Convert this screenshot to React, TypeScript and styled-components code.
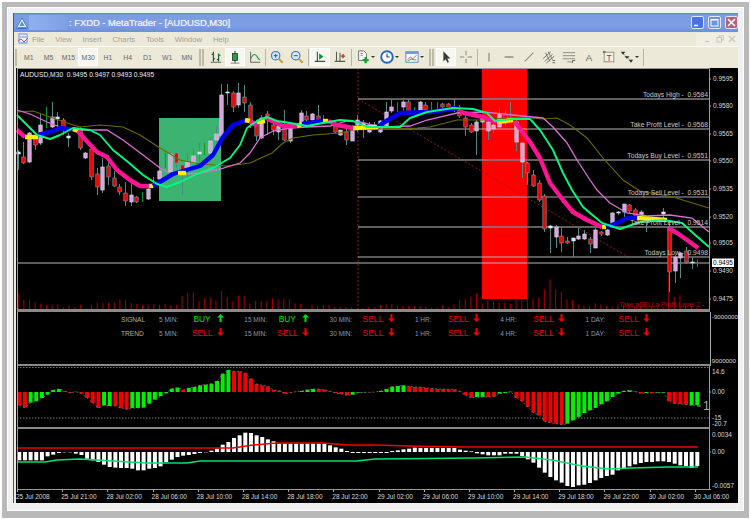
import React from 'react';
import styled, { createGlobalStyle } from 'styled-components';

const Global = createGlobalStyle`
    html, body { margin: 0; padding: 0; background: #fff; }
    body { font-family: "Liberation Sans", Arial, sans-serif; }
`;

const Outer = styled.div`
    box-sizing: border-box;
    margin: 2px 0 0 2px;
    width: 747px;
    height: 516px;
    padding: 5px;
    background: #b9b9b9;
`;
const Inner = styled.div`
    box-sizing: border-box;
    height: 504px;
    padding: 5px 5px 7px 5px;
    background: #f0f0f0;
    border: 1px solid #fff;
`;
const Win = styled.div`
    box-sizing: border-box;
    width: 725px;
    height: 490px;
    border-left: 1px solid #555;
    background: #ece9d8;
    display: flex;
    flex-direction: column;
`;
const TitleBar = styled.div`
    height: 19px;
    flex: none;
    display: flex;
    align-items: center;
    padding-left: 2px;
    background: linear-gradient(to bottom, #5c84dc 0, #7b9ce2 12%, #7e9ee3 65%, #6d90df 100%);
`;
const Erased = styled.span`
    width: 39px;
    height: 15px;
    margin: 0 1px 0 1px;
    background: linear-gradient(to right, #8fb0f0, #7e9ee3);
`;
const TitleText = styled.span`
    flex: 1;
    font-size: 9.4px;
    color: #e6ecf9;
    text-shadow: 0 0 0.4px #fff;
    white-space: pre;
`;
const WinBtn = styled.div<{ $bg: string }>`
    width: 13px;
    height: 13px;
    margin-right: 4px;
    border-radius: 2px;
    border: 0.5px solid #dfe6f7;
    box-sizing: border-box;
    background: ${(p) => p.$bg};
    display: flex;
    align-items: center;
    justify-content: center;
    &:last-child { margin-right: 0; }
`;
const MenuBar = styled.div`
    height: 14px;
    flex: none;
    display: flex;
    align-items: center;
    gap: 10.8px;
    padding-left: 3px;
    font-size: 7.7px;
    color: #a3a198;
`;
const MenuIcon = styled.div`
    width: 12px;
    height: 12px;
    margin-right: -7.8px;
`;
const MenuRight = styled.div`
    margin-left: auto;
    display: flex;
    align-items: center;
    gap: 4px;
    height: 13px;
    padding: 0 2px 0 8px;
    background: #f1efe4;
`;
const ToolBar = styled.div`
    box-sizing: border-box;
    height: 22px;
    flex: none;
    display: flex;
    align-items: center;
    border-top: 1px solid #fbfaf4;
    padding-bottom: 1px;
`;
const Grip = styled.div<{ $double?: boolean; $ml?: number }>`
    flex: none;
    width: ${(p) => (p.$double ? 5 : 2)}px;
    height: 17px;
    margin: 0 2px 0 ${(p) => p.$ml ?? 1}px;
    border-left: 2px solid #bdbaa8;
    border-right: ${(p) => (p.$double ? '2px solid #bdbaa8' : 'none')};
    box-sizing: border-box;
`;
const Sep = styled.div<{ $ml?: number }>`
    flex: none;
    width: 1px;
    height: 17px;
    margin: 0 1px 0 ${(p) => p.$ml ?? 1}px;
    background: #b8b5a3;
`;
const TfBtn = styled.div<{ $on?: boolean }>`
    box-sizing: border-box;
    flex: none;
    width: 19.75px;
    height: 18px;
    display: flex;
    align-items: center;
    justify-content: center;
    font-size: 6.9px;
    color: #666;
    background: ${(p) => (p.$on ? '#f7f6ef' : 'transparent')};
    border: 1px solid ${(p) => (p.$on ? '#fff' : 'transparent')};
`;
const IconBtn = styled.div<{ $on?: boolean; $w?: number }>`
    box-sizing: border-box;
    flex: none;
    width: ${(p) => p.$w ?? 20}px;
    height: 18px;
    display: flex;
    align-items: center;
    justify-content: center;
    gap: 1px;
    background: ${(p) => (p.$on ? '#f7f6ef' : 'transparent')};
    border: 1px solid ${(p) => (p.$on ? '#fff' : 'transparent')};
`;
const Caret = styled.span`
    width: 0;
    height: 0;
    border-left: 2.2px solid transparent;
    border-right: 2.2px solid transparent;
    border-top: 2.5px solid #333;
`;
const ChartArea = styled.div`
    flex: none;
    width: 722px;
    height: 435px;
    margin-left: 2px;
    background: #000;
    display: flex;
    flex-direction: column;
    overflow: hidden;
`;
const Pane = styled.svg`
    display: block;
    flex: none;
`;
const AxisText = styled.text`
    font-size: 6.5px;
    fill: #d8d8d8;
    white-space: pre;
`;
const TopLabel = styled.text`
    font-size: 6.7px;
    fill: #eee;
    white-space: pre;
`;
const LevelText = styled.text<{ $c?: string }>`
    font-size: 6.7px;
    fill: ${(p) => p.$c ?? '#c8c8c8'};
    text-anchor: end;
    white-space: pre;
`;
const SignalPane = styled.div`
    height: 54px;
    flex: none;
    display: flex;
`;
const SignalRows = styled.div`
    box-sizing: border-box;
    width: 694px;
    height: 54px;
    padding: 0 0 0 103px;
    margin-left: 1px;
    border-left: 1px solid #aaa;
    border-right: 1px solid #aaa;
    border-bottom: 2px solid #8a8a8a;
`;
const SignalRow = styled.div`
    display: flex;
    align-items: center;
    height: 14px;
`;
const RowLabel = styled.div`
    width: 38px;
    font-size: 6.6px;
    color: #b4b492;
`;
const TimeCell = styled.div`
    width: 85.3px;
    flex: none;
    display: flex;
    align-items: center;
`;
const TimeLabel = styled.div`
    width: 33px;
    font-size: 6.5px;
    color: #8d9aa8;
    white-space: nowrap;
`;
const SignalValue = styled.div<{ $buy?: boolean }>`
    width: 20px;
    text-align: center;
    font-size: 8.4px;
    color: ${(p) => (p.$buy ? '#00e000' : '#f00000')};
    white-space: nowrap;
`;
const ArrowIcon = styled.svg`
    margin: -3px 0 0 5px;
`;
const ScaleCol = styled.div`
    flex: 1;
    display: flex;
    flex-direction: column;
    justify-content: space-between;
    padding: 1px 0 2px 1px;
    font-size: 6.2px;
    color: #d8d8d8;
    white-space: nowrap;
`;
const TimeAxis = styled.div`
    box-sizing: border-box;
    height: 14px;
    flex: none;
    width: 694px;
    margin-left: 1px;
    display: flex;
    border-top: 1px solid #999;
`;
const TimeTick = styled.div`
    flex: none;
    width: 45.2px;
    position: relative;
    font-size: 6.5px;
    color: #d8d8d8;
    white-space: nowrap;
    padding-top: 3px;
    text-indent: -1px;
    &::before {
        content: '';
        position: absolute;
        left: 0;
        top: 0;
        width: 1px;
        height: 2px;
        background: #aaa;
    }
`;

// icons
const Ico: React.FC<{ children: React.ReactNode }> = ({ children }) => (
    <svg width="14" height="14" viewBox="0 0 16 16" fill="none">{children}</svg>
);

const AppLogo = () => (
    <svg width="12" height="12" viewBox="0 0 12 12">
        <path d="M6 1 L11.5 11 H.5 Z" fill="#e8f2ff" stroke="#2d6fc4" strokeWidth=".8" />
        <path d="M6 4 L8.5 9 H3.5 Z" fill="#4e8fdc" />
        <path d="M2 11 H10" stroke="#1f55a8" strokeWidth="1" />
    </svg>
);
const AppDoc = () => (
    <svg width="12" height="12" viewBox="0 0 12 12">
        <rect x="2" y="1" width="8" height="9" fill="#eef2ff" stroke="#6d8fcf" />
        <path d="M3 4 H9" stroke="#6d8fcf" />
        <path d="M1 8 L4 6 L7 9 L11 5" stroke="#a05a7a" fill="none" />
        <rect x="2" y="9" width="8" height="2" fill="#9db6ea" />
    </svg>
);
const BarsIco = () => (
    <Ico>
        <path d="M5 2 V13 M3 5 H5 M5 10 H7 M11 4 V13 M9 11 H11 M11 6 H13" stroke="#0b5b2c" strokeWidth="1.3" />
        <path d="M2 14 H14" stroke="#555" />
    </Ico>
);
const CandlesIco = () => (
    <Ico>
        <path d="M8 1 V15" stroke="#222" />
        <rect x="5" y="4" width="6" height="8" fill="#1fa045" stroke="#222" strokeWidth=".8" />
        <path d="M3 15 H13" stroke="#777" />
    </Ico>
);
const LineIco = () => (
    <Ico>
        <path d="M3 2 V14 H14" stroke="#555" />
        <path d="M3 10 Q7 2 10 7 T14 11" stroke="#1f9a5b" strokeWidth="1.2" />
    </Ico>
);
const ZoomIco: React.FC<{ plus?: boolean }> = ({ plus }) => (
    <Ico>
        <circle cx="6.5" cy="6.5" r="4.8" fill="#d8e8fb" stroke="#3b72b8" strokeWidth="1.3" />
        <path d="M4.2 6.5 H8.8" stroke="#2a5ca8" strokeWidth="1.2" />
        {plus && <path d="M6.5 4.2 V8.8" stroke="#2a5ca8" strokeWidth="1.2" />}
        <path d="M10 10 L14.5 14.5" stroke="#c9a23a" strokeWidth="2.4" />
    </Ico>
);
const ShiftIco = () => (
    <Ico>
        <path d="M5 2 V13 M2 13 H14" stroke="#33573f" strokeWidth="1.3" />
        <path d="M7 4 L12 7.5 L7 11 Z" fill="#0d8f35" />
    </Ico>
);
const ScrollIco = () => (
    <Ico>
        <path d="M4 2 V13 M2 13 H14 M8 3 V13" stroke="#53604f" strokeWidth="1.2" />
        <path d="M9 7 H14 M11.5 4.5 V9.5" stroke="#c0392b" strokeWidth="1.6" />
    </Ico>
);
const OrderIco = () => (
    <Ico>
        <path d="M3 1 H9 L12 4 V12 H3 Z" fill="#f8f8f8" stroke="#666" />
        <path d="M5 4 H8 M5 6 H8" stroke="#889" />
        <path d="M11 8 V15 M7.5 11.5 H14.5" stroke="#12a52c" strokeWidth="2.6" />
    </Ico>
);
const ClockIco = () => (
    <Ico>
        <circle cx="8" cy="8" r="6.6" fill="#fff" stroke="#2067c0" strokeWidth="2.2" />
        <path d="M8 4 V8 H11" stroke="#1a3d7a" strokeWidth="1.2" />
    </Ico>
);
const TemplateIco = () => (
    <Ico>
        <rect x="1" y="2" width="14" height="12" fill="#f4f6fb" stroke="#5a7fb8" />
        <rect x="1" y="2" width="14" height="2.5" fill="#6d9ad8" />
        <path d="M3 11 L6 8 L9 10 L13 6" stroke="#c0504d" />
        <path d="M3 12.5 L7 10.5 L13 11.5" stroke="#3d9a52" />
    </Ico>
);
const CursorIco = () => (
    <Ico>
        <path d="M5 1.5 V13 L7.7 10.6 L9.6 14.5 L11.4 13.6 L9.5 9.8 L13 9.6 Z" fill="#3a3a3a" />
    </Ico>
);
const CrossIco = () => (
    <Ico>
        <path d="M8 1 V6 M8 10 V15 M1 8 H6 M10 8 H15" stroke="#777" />
    </Ico>
);
const VLineIco = () => <Ico><path d="M8 3 V13" stroke="#8a8a80" strokeWidth="1.4" /></Ico>;
const HLineIco = () => <Ico><path d="M3 8 H13" stroke="#777" strokeWidth="1.4" /></Ico>;
const TrendIco = () => <Ico><path d="M3 13 L13 3" stroke="#8a8a80" strokeWidth="1.3" /></Ico>;
const ChannelIco = () => (
    <Ico>
        <path d="M1 10 L10 2 M3 13 L12 5 M5 15 L14 7 M4 3 L9 13 M7 2 L12 11" stroke="#6a6a62" strokeWidth="1" />
        <path d="M12 12 H15 M12 14.5 H15" stroke="#555" />
    </Ico>
);
const FiboIco = () => (
    <Ico>
        <path d="M1 3 H15 M1 6.5 H15 M1 10 H15 M6 13.5 H11" stroke="#8a8a80" strokeWidth="1.1" />
        <path d="M12 12 V15 M12 12 H15" stroke="#555" />
    </Ico>
);
const LetterIco = () => (
    <Ico>
        <text x="8" y="12.5" fontSize="11" textAnchor="middle" fill="#666" fontFamily="Liberation Sans">A</text>
    </Ico>
);
const BoxIco = () => (
    <Ico>
        <rect x="2.5" y="2.5" width="11" height="11" fill="#f2f0e4" stroke="#8a8a80" />
        <rect x="1" y="1" width="3" height="2.5" fill="#777" />
        <text x="8" y="12" fontSize="9.5" textAnchor="middle" fill="#555" fontFamily="Liberation Sans">T</text>
    </Ico>
);
const ArrowsIco = () => (
    <Ico>
        <path d="M2 3 L8 8 L14 13" stroke="#555" strokeDasharray="1 1" />
        <path d="M1 2 H6 L3.5 5.5 Z M5 7 H11 L8 10 Z M10 11 H15 L12.5 14.5 Z" fill="#2e2e2e" />
    </Ico>
);

const Arrow: React.FC<{ up?: boolean }> = ({ up }) => (
    <ArrowIcon width="7" height="8" viewBox="0 0 7 8">
        <path
            d={up ? 'M3.5 0 L7 3.6 H4.5 V8 H2.5 V3.6 H0 Z' : 'M3.5 8 L7 4.4 H4.5 V0 H2.5 V4.4 H0 Z'}
            fill={up ? '#00e000' : '#f00000'}
        />
    </ArrowIcon>
);

// chart data, all in page pixels
type Candle = [number, number, number, number, number, 'p' | 'r' | 'g' | 'd'];

const candles: Candle[] = [
    [18, 152, 154, 150, 170, 'd'], [23, 157, 163, 142, 164, 'r'], [29, 133, 162, 132, 163, 'p'], [35, 138, 145, 137, 150, 'r'],
    [40, 125, 143, 113, 145, 'p'], [46, 122, 128, 107, 128, 'g'], [52, 117, 127, 102, 128, 'p'], [57, 117, 119, 112, 130, 'd'],
    [63, 120, 130, 118, 135, 'r'], [68, 136, 138, 133, 147, 'd'], [80, 130, 148, 127, 150, 'r'], [85, 153, 158, 152, 159, 'p'],
    [91, 149, 177, 148, 180, 'r'], [97, 174, 187, 168, 195, 'r'], [102, 167, 190, 158, 193, 'p'], [108, 166, 177, 155, 185, 'r'],
    [114, 178, 186, 171, 187, 'r'], [119, 187, 192, 184, 195, 'r'], [125, 193, 201, 182, 206, 'r'], [131, 195, 202, 183, 206, 'p'],
    [136, 197, 202, 196, 203, 'r'], [142, 192, 202, 192, 202, 'g'], [148, 189, 199, 187, 200, 'p'], [153, 184, 186, 177, 188, 'd'],
    [159, 171, 179, 168, 180, 'p'], [165, 153, 168, 153, 168, 'g'], [170, 154, 172, 152, 173, 'p'], [176, 153, 163, 152, 168, 'r'],
    [182, 165, 172, 165, 195, 'r'], [187, 162, 170, 153, 178, 'p'], [193, 156, 163, 148, 165, 'p'], [199, 152, 154, 143, 165, 'd'],
    [204, 143, 155, 143, 155, 'g'], [210, 141, 153, 137, 163, 'p'], [216, 134, 140, 126, 150, 'p'], [221, 95, 136, 84, 137, 'p'],
    [227, 92, 93, 84, 105, 'd'], [233, 93, 107, 91, 112, 'r'], [238, 93, 105, 83, 108, 'p'], [244, 97, 103, 85, 112, 'r'],
    [250, 105, 123, 102, 128, 'r'], [256, 123, 136, 120, 141, 'r'], [261, 118, 138, 115, 139, 'p'], [267, 114, 116, 111, 135, 'r'],
    [273, 125, 130, 123, 135, 'r'], [278, 126, 132, 121, 140, 'p'], [284, 128, 140, 110, 141, 'r'], [290, 128, 141, 128, 143, 'p'],
    [301, 113, 123, 110, 126, 'p'], [306, 116, 120, 111, 121, 'r'], [312, 114, 120, 113, 123, 'p'], [318, 116, 120, 105, 120, 'r'],
    [323, 115, 120, 115, 120, 'g'], [335, 126, 132, 120, 133, 'r'], [340, 130, 135, 130, 136, 'p'], [346, 132, 140, 128, 145, 'r'],
    [352, 130, 141, 125, 141, 'p'], [357, 120, 125, 115, 132, 'p'], [363, 123, 125, 120, 138, 'd'], [369, 127, 132, 122, 133, 'p'],
    [374, 125, 127, 122, 130, 'd'], [380, 121, 132, 120, 133, 'p'], [386, 112, 127, 102, 127, 'p'], [391, 107, 111, 99, 113, 'p'],
    [397, 102, 115, 102, 115, 'g'], [403, 102, 107, 100, 112, 'p'], [408, 102, 112, 99, 113, 'r'], [414, 107, 113, 107, 113, 'g'],
    [420, 102, 111, 101, 112, 'p'], [425, 105, 110, 102, 112, 'r'], [431, 102, 110, 102, 110, 'g'], [437, 102, 109, 102, 109, 'g'],
    [442, 104, 107, 103, 108, 'r'], [448, 104, 108, 103, 108, 'r'], [454, 108, 110, 99, 112, 'd'], [459, 110, 116, 105, 118, 'r'],
    [465, 118, 127, 115, 136, 'r'], [471, 125, 132, 123, 133, 'r'], [476, 122, 131, 120, 155, 'p'], [482, 118, 122, 115, 124, 'p'],
    [488, 122, 131, 121, 140, 'p'], [493, 125, 129, 123, 133, 'p'], [499, 114, 127, 108, 127, 'p'], [505, 115, 123, 110, 127, 'r'],
    [510, 118, 121, 102, 122, 'd'], [516, 122, 142, 120, 151, 'p'], [522, 143, 162, 143, 178, 'p'], [527, 163, 173, 162, 185, 'r'],
    [533, 175, 186, 170, 187, 'r'], [539, 183, 200, 180, 202, 'r'], [544, 196, 229, 194, 232, 'r'], [550, 226, 228, 225, 253, 'd'],
    [556, 227, 237, 225, 248, 'p'], [561, 236, 243, 227, 252, 'r'], [567, 241, 243, 237, 244, 'r'], [573, 238, 241, 238, 257, 'd'],
    [578, 236, 239, 228, 240, 'p'], [584, 234, 239, 230, 240, 'p'], [590, 239, 244, 237, 253, 'r'], [595, 230, 248, 228, 248, 'p'],
    [601, 232, 234, 231, 236, 'r'], [607, 230, 235, 229, 236, 'p'], [612, 213, 223, 212, 227, 'p'], [618, 212, 213, 211, 215, 'd'],
    [624, 204, 212, 204, 220, 'p'], [629, 205, 211, 204, 214, 'r'], [635, 210, 216, 208, 217, 'r'], [641, 212, 215, 210, 216, 'p'],
    [646, 220, 222, 218, 232, 'd'], [663, 212, 214, 208, 218, 'd'], [669, 227, 272, 220, 292, 'r'], [675, 257, 271, 255, 283, 'p'],
    [680, 253, 258, 252, 278, 'p'], [686, 251, 262, 247, 264, 'r'], [692, 262, 263, 258, 269, 'd'], [697, 259, 267, 259, 267, 'g'],
];

// bar tops read off the picture, 3 units to a pixel, 58 is the baseline
const volLeft = [10, 30, 30, 37, 41, 45, 44, 44, 52, 45, 52, 44, 56, 44, 38, 40, 38, 38, 28, 30, 38, 42, 45, 44, 42, 45, 42, 45, 45, 18, 10, 8, 33, 25, 22, 32, 3, 20, 33, 18, 18, 40, 33, 33, 33, 25, 28, 25, 28, 40, 42, 56, 45, 48, 45, 45, 52, 52, 52, 52, 56, 54, 52, 52];
const volRight = [45, 43, 42, 47, 48, 48, 48, 48, 50, 53, 53, 45, 52, 43, 30, 28, 20, 10, 41, 33, 35, 36, 36, 42, 30, 28, 20, 25, 24, -2, -32, -2, 5, 27, 30, 43, 47, 48, 40, 43, 48, 51, 43, 47, 45, 50, 48, 52, 50, 52, 50, -50, 20, 15, 45, 50, 52];

const green = [[17, 115], [27, 125], [37, 135], [50, 139], [60, 135], [73, 128], [90, 130], [100, 135], [113, 150], [128, 162], [143, 175], [157, 184], [167, 187], [180, 182], [197, 174], [213, 168], [230, 158], [240, 145], [247, 128], [257, 121], [267, 117], [277, 121], [290, 123], [307, 126], [323, 123], [340, 120], [353, 121], [367, 127], [400, 127], [410, 118], [427, 112], [453, 108], [473, 109], [487, 113], [495, 121], [513, 119], [530, 119], [540, 130], [553, 150], [563, 173], [572, 190], [583, 207], [602, 223], [620, 229], [640, 222], [663, 220], [682, 223], [693, 233], [709, 247]];
const plum = [[17, 110], [30, 114], [47, 122], [63, 128], [80, 130], [107, 130], [123, 140], [143, 155], [160, 168], [173, 175], [200, 173], [220, 169], [240, 163], [250, 153], [260, 138], [273, 131], [290, 128], [307, 127], [330, 126], [347, 121], [360, 122], [380, 127], [410, 126], [427, 120], [457, 113], [483, 112], [513, 115], [543, 118], [553, 127], [567, 143], [577, 160], [590, 180], [597, 190], [610, 203], [627, 213], [647, 216], [670, 215], [692, 218], [709, 232]];
const olive = [[17, 112], [33, 111], [50, 117], [67, 123], [80, 127], [100, 125], [123, 127], [140, 135], [160, 148], [180, 160], [200, 164], [227, 166], [250, 163], [272, 153], [283, 143], [293, 138], [313, 135], [340, 133], [353, 130], [380, 129], [417, 128], [430, 127], [457, 120], [483, 120], [517, 117], [543, 119], [557, 118], [570, 125], [587, 138], [603, 158], [623, 180], [640, 191], [673, 197], [709, 208]];

// the thick signal line changes colour along its way
const thick: [string, number[][]][] = [
    ['#ff1493', [[17, 130], [25, 137]]],
    ['#ffee00', [[25, 137], [38, 137]]],
    ['#0000f0', [[38, 135], [50, 132], [60, 128], [76, 130]]],
    ['#ffee00', [[73, 129], [78, 131]]],
    ['#ff1493', [[78, 131], [83, 137], [97, 152], [107, 157], [117, 170], [130, 180], [140, 186], [150, 186]]],
    ['#ffee00', [[149, 186], [153, 186]]],
    ['#0000f0', [[153, 186], [163, 180], [173, 174], [200, 166], [213, 155], [223, 137], [233, 125], [247, 120]]],
    ['#ffee00', [[178, 173], [186, 173]]],
    ['#ffee00', [[245, 120], [250, 121]]],
    ['#ff1493', [[250, 121], [257, 126]]],
    ['#ffee00', [[257, 122], [265, 121]]],
    ['#ff1493', [[265, 117], [270, 120], [283, 126], [297, 126]]],
    ['#ffee00', [[297, 126], [302, 124]]],
    ['#0000f0', [[302, 124], [323, 121]]],
    ['#ffee00', [[323, 121], [328, 121]]],
    ['#ff1493', [[328, 121], [337, 125], [353, 128]]],
    ['#ffee00', [[353, 128], [378, 127]]],
    ['#0000f0', [[378, 127], [383, 123], [400, 113], [430, 112], [457, 108]]],
    ['#ff1493', [[460, 112], [483, 117], [497, 122]]],
    ['#ffee00', [[497, 122], [513, 120]]],
    ['#ff1493', [[515, 122], [530, 142], [540, 158], [550, 183], [563, 200], [573, 212], [587, 220], [602, 227]]],
    ['#ffee00', [[602, 227], [606, 227]]],
    ['#0000f0', [[606, 227], [617, 223], [627, 218], [637, 218]]],
    ['#ffee00', [[637, 218], [667, 220]]],
    ['#ff1493', [[668, 228], [677, 233], [687, 240], [698, 248]]],
];

const pts = (a: number[][]) => a.map((p) => p.join(',')).join(' ');

const levels: [number, string, string, number][] = [
    [99, 'Todays High -  0.9584', '#808080', 1.6],
    [129, 'Take Profit Level -  0.9568', '#b4b4b4', 1],
    [160, 'Todays Buy Level -  0.9551', '#808080', 1.6],
    [197, 'Todays Sell Level -  0.9531', '#a8a8a8', 1],
    [227, 'Take Profit Level -  0.9514', '#808080', 1.6],
    [257, 'Todays Low -  0.9498', '#b4b4b4', 1],
];
const priceScale: [number, string][] = [
    [79, '0.9595'], [106, '0.9580'], [134, '0.9565'], [161, '0.9550'], [189, '0.9535'], [217, '0.9520'], [243, '0.9505'], [271, '0.9490'], [299, '0.9475'],
];

const barX = (i: number) => 19.3 + 5.65 * i;

const aoRuns: [string, number[]][] = [
    ['r', [-40, -47]], ['g', [-32, -28, -18, -8, 6, 9]], ['r', [3, -3, 1, -5, -18, -33, -48]], ['g', [-40, -42]], ['r', [-42, -48, -52]],
    ['g', [-48, -48, -47, -35, -23, -12, -4, 10, 13]], ['r', [6]], ['g', [12, 15, 20, 22, 25, 33, 55, 66]],
    ['r', [62, 62, 57, 40, 24, 20, 17, 6, 4, -5, -2, 1]], ['g', [3, 7, 9]], ['r', [9, 7, 2, -3, -6, -10]], ['g', [-8, -2, -1]], ['r', [-1, 0]],
    ['g', [3, 9, 16, 18, 20]], ['r', [17, 15, 15, 12, 11, 9, 9, 8, 8, 2, -10, -17]], ['g', [-15, -15]], ['r', [-15, -14]], ['g', [-5, -3, 1]],
    ['r', [-18, -28, -45, -62, -70, -88, -92, -95, -98]], ['g', [-95, -85, -75, -63, -55, -48, -37, -28, -15, -5, 3, 5, 1]], ['r', [-4]], ['g', [-3]], ['r', [-3]], ['g', [-2, -2]],
    ['r', [-28, -35, -36, -38]], ['g', [-40, -40]],
];
const aoBars = aoRuns.flatMap(([c, vals]) => vals.map((v) => ({ c, v })));

const macd = [-25, -25, -25, -25, -25, -13, -8, -3, -1, -1, -5, -9, -20, -25, -30, -38, -45, -47, -48, -48, -50, -55, -55, -50, -48, -43, -30, -23, -15, -11, -9, -6, -3, -1, 4, 10, 22, 30, 42, 50, 58, 57, 50, 45, 38, 32, 25, 25, 25, 25, 25, 25, 25, 25, 25, 20, 14, 10, 3, -3, -3, -3, -3, -3, -3, -3, 3, 5, 8, 10, 13, 12, 12, 12, 12, 12, 12, 12, 7, 4, 2, -4, -7, -10, -10, -10, -5, -5, -5, -12, -22, -32, -47, -62, -75, -85, -92, -102, -105, -100, -98, -93, -85, -78, -72, -68, -55, -50, -43, -37, -33, -30, -30, -28, -28, -30, -35, -40, -42, -48, -42];
const macdRed = [[17, 448], [233, 448], [253, 445], [277, 443], [323, 443], [347, 445], [375, 445], [408, 446], [462, 447], [698, 447]];
const macdGreen = [[17, 462], [45, 462], [57, 460], [80, 459], [97, 460], [113, 461], [147, 463], [187, 463], [200, 461], [357, 461], [375, 459], [475, 458], [525, 457], [552, 460], [582, 466], [608, 469], [632, 468], [668, 467], [698, 467]];

const timeLabels = ['25 Jul 2008', '25 Jul 21:00', '28 Jul 02:00', '28 Jul 06:00', '28 Jul 10:00', '28 Jul 14:00', '28 Jul 18:00', '28 Jul 22:00', '29 Jul 02:00', '29 Jul 06:00', '29 Jul 10:00', '29 Jul 14:00', '29 Jul 18:00', '29 Jul 22:00', '30 Jul 02:00', '30 Jul 06:00'];
const timeframes = ['M1', 'M5', 'M15', 'M30', 'H1', 'H4', 'D1', 'W1', 'MN'];

const MainChart = () => (
    <Pane width="722" height="244" viewBox="16 68 722 244">
        <rect x="159" y="118" width="62" height="83" fill="#3cb371" />
        <rect x="482" y="68" width="45" height="231" fill="#ff0000" />
        {volLeft.map((t, i) => (
            <rect key={i} x={17.7 + 5.65 * i} y={290 + t / 3} width="1" height={(58 - t) / 3} fill="#a80000" />
        ))}
        {volRight.map((t, i) => (
            <rect key={i} x={380 + 5.65 * i} y={290 + t / 3} width="1" height={(58 - t) / 3} fill="#a80000" />
        ))}
        <path d="M358 68 V309" stroke="#a01818" strokeDasharray="2 2" />
        <path d="M358 99 L628 257" stroke="#a01818" strokeDasharray="2 2" />
        <path d="M17 263 H709" stroke="#b8b8b8" />
        {levels.map(([y, , c, w]) => (
            <path key={y} d={`M358 ${y} H709`} stroke={c} strokeWidth={w} />
        ))}
        {candles.map(([x, bt, bb, wt, wb, k], i) => (
            <g key={i}>
                <rect x={x} y={wt} width="1" height={wb - wt} fill={k === 'g' ? '#0a9a20' : '#4f8a8a'} />
                {k !== 'g' && (
                    <rect
                        x={x - 1.2}
                        y={bt}
                        width="3.4"
                        height={bb - bt}
                        fill={k === 'r' ? '#f00000' : k === 'p' ? '#dda0dd' : '#d8e8f0'}
                        stroke={k === 'r' ? '#7f9fb0' : '#d8e4e8'}
                        strokeWidth=".6"
                    />
                )}
            </g>
        ))}
        <polyline points={pts(olive)} fill="none" stroke="#6b6b00" strokeWidth="1.1" />
        <polyline points={pts(plum)} fill="none" stroke="#da70d6" strokeWidth="1.3" />
        {thick.map(([c, p], i) => (
            <polyline key={i} points={pts(p)} fill="none" stroke={c} strokeWidth="4.4" strokeLinejoin="round" />
        ))}
        <polyline points={pts(green)} fill="none" stroke="#00fa80" strokeWidth="1.9" strokeLinejoin="round" />
        {levels.map(([y, t]) => (
            <LevelText key={y} x="708" y={y - 2.5}>{t}</LevelText>
        ))}
        <LevelText x="704" y="307" $c="#c00000">Take pSELLa Profit Level 2 -</LevelText>
        <TopLabel x="20" y="77">AUDUSD,M30  0.9495 0.9497 0.9493 0.9495</TopLabel>
        <path d="M17 68.5 H709.5 V309 M17.5 68 V309" stroke="#9a9a9a" fill="none" />
        <rect x="17" y="309" width="693" height="3" fill="#8a8a8a" />
        {priceScale.map(([y, t]) => (
            <g key={y}>
                <path d={`M709 ${y} H711`} stroke="#aaa" />
                <AxisText x="713" y={y + 2.3}>{t}</AxisText>
            </g>
        ))}
        <rect x="712" y="258.5" width="22" height="8.5" fill="#fff" />
        <text x="723" y="265.4" fontSize="6.5" textAnchor="middle" fill="#000">0.9495</text>
    </Pane>
);

const AoChart = () => (
    <Pane width="722" height="63" viewBox="16 366 722 63">
        <path d="M17 367.5 H709 M17 418 H709" stroke="#777" strokeDasharray="1.5 1.5" />
        {aoBars.map(({ c, v }, i) => (
            <rect
                key={i}
                x={barX(i) - 2}
                y={v > 0 ? 392 - v / 3 : 392}
                width="4"
                height={Math.abs(v) / 3}
                fill={c === 'r' ? '#f00000' : '#00f000'}
            />
        ))}
        <polyline
            points={aoBars.map(({ v }, i) => `${barX(i)},${392 - v / 3}`).join(' ')}
            fill="none"
            stroke="#777"
            strokeWidth=".8"
            strokeDasharray="2 2"
        />
        <path d="M697 406 H701" stroke="#999" />
        <path d="M17.5 366 V427 M709.5 366 V427" stroke="#9a9a9a" />
        <rect x="17" y="427" width="693" height="2" fill="#8a8a8a" />
        <AxisText x="712" y="373.5">14.6</AxisText>
        <AxisText x="712" y="394.3">0.00</AxisText>
        <AxisText x="712" y="420">-15</AxisText>
        <AxisText x="712" y="425.5">-20.7</AxisText>
        <text x="703" y="410" fontSize="12" fill="#aaa">1</text>
        <path d="M709 392 H711" stroke="#aaa" />
    </Pane>
);

const MacdChart = () => (
    <Pane width="722" height="60" viewBox="16 429 722 60">
        {macd.map((v, i) => (
            <rect
                key={i}
                x={barX(i) - 2}
                y={v > 0 ? 452 - v / 3 : 452}
                width="4"
                height={Math.abs(v) / 3}
                fill="#fff"
            />
        ))}
        <polyline points={pts(macdRed)} fill="none" stroke="#f00000" strokeWidth="1.5" />
        <polyline points={pts(macdGreen)} fill="none" stroke="#00e070" strokeWidth="1.5" />
        <path d="M17.5 429 V489 M709.5 429 V489" stroke="#9a9a9a" />
        <AxisText x="712" y="436.5">0.0034</AxisText>
        <AxisText x="712" y="454.3">0.00</AxisText>
        <AxisText x="712" y="487.5">-0.0057</AxisText>
        <path d="M709 452 H711" stroke="#aaa" />
    </Pane>
);

const signalCells: [string, boolean][] = [
    ['5 MIN:', true],
    ['15 MIN:', true],
    ['30 MIN:', false],
    ['1 HR:', false],
    ['4 HR:', false],
    ['1 DAY:', false],
];

const SignalLine: React.FC<{ label: string; trend?: boolean }> = ({ label, trend }) => (
    <SignalRow>
        <RowLabel>{label}</RowLabel>
        {signalCells.map(([name, buy]) => {
            const isBuy = buy && !trend;
            return (
                <TimeCell key={name}>
                    <TimeLabel>{name}</TimeLabel>
                    <SignalValue $buy={isBuy}>{isBuy ? 'BUY' : 'SELL'}</SignalValue>
                    <Arrow up={isBuy} />
                </TimeCell>
            );
        })}
    </SignalRow>
);

const App: React.FC = () => (
    <>
        <Global />
        <Outer>
            <Inner>
                <Win>
                    <TitleBar>
                        <AppLogo />
                        <Erased />
                        <TitleText>: FXDD - MetaTrader - [AUDUSD,M30]</TitleText>
                        <WinBtn $bg="#4a73e2">
                            <svg width="9" height="9" viewBox="0 0 9 9"><path d="M1 7.5 H5" stroke="#fff" strokeWidth="1.6" /></svg>
                        </WinBtn>
                        <WinBtn $bg="#6d8fe4">
                            <svg width="9" height="9" viewBox="0 0 9 9"><rect x="1" y="1.5" width="7" height="6.5" fill="none" stroke="#fff" /><path d="M1 1.8 H8" stroke="#fff" strokeWidth="1.4" /></svg>
                        </WinBtn>
                        <WinBtn $bg="#b1607f">
                            <svg width="9" height="9" viewBox="0 0 9 9"><path d="M1 1 L8 8 M8 1 L1 8" stroke="#fff" strokeWidth="1.6" /></svg>
                        </WinBtn>
                    </TitleBar>
                    <MenuBar>
                        <MenuIcon><AppDoc /></MenuIcon>
                        <span>File</span>
                        <span>View</span>
                        <span>Insert</span>
                        <span>Charts</span>
                        <span>Tools</span>
                        <span>Window</span>
                        <span>Help</span>
                        <MenuRight>
                            <svg width="8" height="8" viewBox="0 0 8 8"><path d="M1 6.5 H5" stroke="#c8c6ba" strokeWidth="1.2" /></svg>
                            <svg width="8" height="8" viewBox="0 0 8 8"><rect x="1" y="2.5" width="4.5" height="4.5" fill="none" stroke="#c8c6ba" /><path d="M3 2 V.8 H7.3 V5 H6" fill="none" stroke="#c8c6ba" /></svg>
                            <svg width="8" height="8" viewBox="0 0 8 8"><path d="M1 1 L7 7 M7 1 L1 7" stroke="#c8c6ba" strokeWidth="1.2" /></svg>
                        </MenuRight>
                    </MenuBar>
                    <ToolBar>
                        <Grip />
                        {timeframes.map((t) => (
                            <TfBtn key={t} $on={t === 'M30'}>{t}</TfBtn>
                        ))}
                        <Grip $double $ml={2} />
                        <IconBtn $w={19.5}><BarsIco /></IconBtn>
                        <IconBtn $w={19.5} $on><CandlesIco /></IconBtn>
                        <IconBtn $w={19.5}><LineIco /></IconBtn>
                        <Sep />
                        <IconBtn><ZoomIco plus /></IconBtn>
                        <IconBtn><ZoomIco /></IconBtn>
                        <Sep />
                        <IconBtn $on><ShiftIco /></IconBtn>
                        <IconBtn><ScrollIco /></IconBtn>
                        <Sep />
                        <IconBtn $w={24}><OrderIco /><Caret /></IconBtn>
                        <IconBtn $w={25}><ClockIco /><Caret /></IconBtn>
                        <IconBtn $w={25}><TemplateIco /><Caret /></IconBtn>
                        <Grip $double $ml={2} />
                        <IconBtn $w={19.5} $on><CursorIco /></IconBtn>
                        <IconBtn><CrossIco /></IconBtn>
                        <Sep />
                        <IconBtn><VLineIco /></IconBtn>
                        <IconBtn><HLineIco /></IconBtn>
                        <IconBtn><TrendIco /></IconBtn>
                        <IconBtn><ChannelIco /></IconBtn>
                        <IconBtn><FiboIco /></IconBtn>
                        <IconBtn><LetterIco /></IconBtn>
                        <IconBtn><BoxIco /></IconBtn>
                        <IconBtn $w={22}><ArrowsIco /><Caret /></IconBtn>
                        <Sep $ml={2} />
                    </ToolBar>
                    <ChartArea>
                        <MainChart />
                        <SignalPane>
                            <SignalRows>
                                <SignalLine label="SIGNAL" />
                                <SignalLine label="TREND" trend />
                            </SignalRows>
                            <ScaleCol>
                                <span>-9000000</span>
                                <span>9000000</span>
                            </ScaleCol>
                        </SignalPane>
                        <AoChart />
                        <MacdChart />
                        <TimeAxis>
                            {timeLabels.map((t) => (
                                <TimeTick key={t}>{t}</TimeTick>
                            ))}
                        </TimeAxis>
                    </ChartArea>
                </Win>
            </Inner>
        </Outer>
    </>
);

export default App;
